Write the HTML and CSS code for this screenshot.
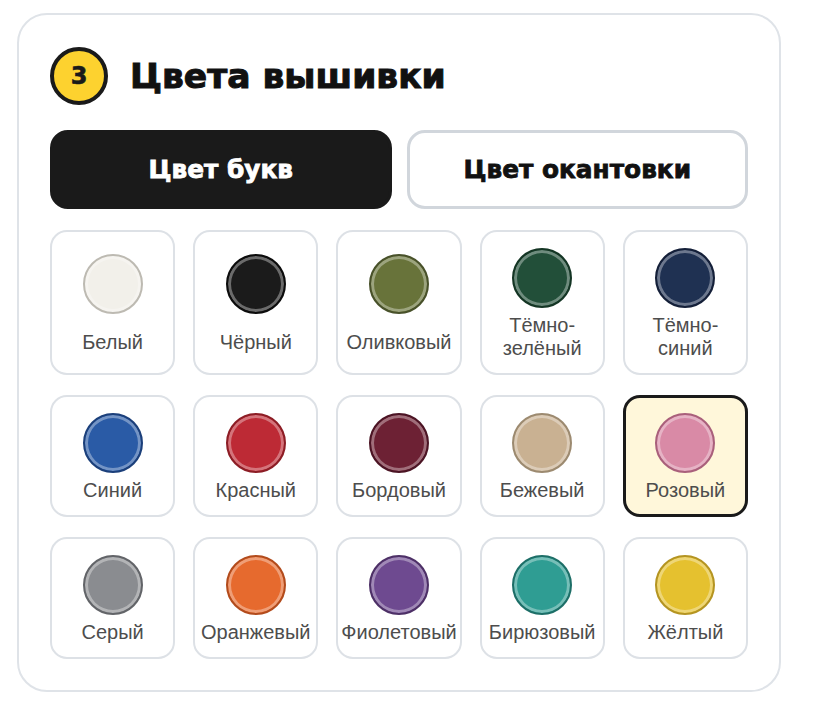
FILE: index.html
```html
<!DOCTYPE html>
<html lang="ru">
<head>
<meta charset="utf-8">
<title>Цвета вышивки</title>
<link rel="stylesheet" href="styles.css">
</head>
<body>
<section class="card">
  <header class="head">
    <span class="step">3</span>
    <h2 class="title">Цвета вышивки</h2>
  </header>
  <div class="tabs">
    <button class="tab tab-active">Цвет букв</button>
    <button class="tab">Цвет окантовки</button>
  </div>
  <div class="grid">
    <div class="cell"><span class="dot c-white"></span><span class="label">Белый</span></div>
    <div class="cell"><span class="dot c-black"></span><span class="label">Чёрный</span></div>
    <div class="cell"><span class="dot c-olive"></span><span class="label">Оливковый</span></div>
    <div class="cell"><span class="dot c-dgreen"></span><span class="label">Тёмно-<br>зелёный</span></div>
    <div class="cell"><span class="dot c-dblue"></span><span class="label">Тёмно-<br>синий</span></div>
    <div class="cell"><span class="dot c-blue"></span><span class="label">Синий</span></div>
    <div class="cell"><span class="dot c-red"></span><span class="label">Красный</span></div>
    <div class="cell"><span class="dot c-bordo"></span><span class="label">Бордовый</span></div>
    <div class="cell"><span class="dot c-beige"></span><span class="label">Бежевый</span></div>
    <div class="cell cell-selected"><span class="dot c-pink"></span><span class="label">Розовый</span></div>
    <div class="cell"><span class="dot c-grey"></span><span class="label">Серый</span></div>
    <div class="cell"><span class="dot c-orange"></span><span class="label">Оранжевый</span></div>
    <div class="cell"><span class="dot c-violet"></span><span class="label">Фиолетовый</span></div>
    <div class="cell"><span class="dot c-teal"></span><span class="label">Бирюзовый</span></div>
    <div class="cell"><span class="dot c-yellow"></span><span class="label">Жёлтый</span></div>
  </div>
</section>
</body>
</html>
```
FILE: styles.css
```css
* { box-sizing: border-box; }
html, body { background: #ffffff; }
body {
  margin: 0;
  padding: 13px 0 0 17px;
  font-family: "Liberation Sans", Arial, sans-serif;
}
.card {
  width: 764px;
  border: 2px solid #dfe3e8;
  border-radius: 30px;
  padding: 32px 31px 31px 31px;
  background: #fff;
}
.head {
  display: flex;
  align-items: center;
  gap: 22px;
}
.step {
  width: 58px;
  height: 58px;
  border-radius: 50%;
  border: 4px solid #1a1a1a;
  background: #fdd22f;
  display: flex;
  align-items: center;
  justify-content: center;
  font-family: "DejaVu Sans", sans-serif;
  font-weight: 700;
  font-size: 24px;
  color: #1a1a1a;
  -webkit-text-stroke: 0.6px #1a1a1a;
}
.title {
  margin: 0;
  font-family: "DejaVu Sans", sans-serif;
  font-weight: 700;
  font-size: 34.5px;
  color: #111;
  -webkit-text-stroke: 1px #111;
}
.tabs {
  display: grid;
  grid-template-columns: 1fr 1fr;
  gap: 15px;
  margin-top: 25px;
}
.tab {
  height: 79px;
  border-radius: 18px;
  border: 3px solid #d1d6dc;
  background: #fff;
  font-family: "DejaVu Sans", sans-serif;
  font-weight: 700;
  font-size: 24.8px;
  color: #111;
  -webkit-text-stroke: 0.8px #111;
  padding: 0;
}
.tab-active {
  background: #1a1a1a;
  border-color: #1a1a1a;
  color: #fff;
  -webkit-text-stroke: 0.8px #fff;
}
.grid {
  display: grid;
  grid-template-columns: repeat(5, 1fr);
  column-gap: 18px;
  row-gap: 20px;
  margin-top: 21px;
}
.cell {
  border: 2px solid #dde1e6;
  border-radius: 17px;
  display: flex;
  flex-direction: column;
  align-items: center;
  justify-content: space-around;
  padding: 16px 2px 13px;
  background: #fff;
}
.cell-selected {
  border: 3px solid #1a1a1a;
  background: #fff7da;
  padding: 15px 1px 12px;
}
.dot {
  width: 60px;
  height: 60px;
  border-radius: 50%;
  border: 2px solid var(--edge);
  background: var(--fill);
  box-shadow: inset 0 0 0 3px rgba(255, 255, 255, 0.35);
  flex: none;
}
.label {
  margin-top: 6px;
  font-size: 20px;
  line-height: 23px;
  color: #4d4d4d;
  text-align: center;
  white-space: nowrap;
}
.c-white  { --fill: #f2f0ea; --edge: #bdbab2; box-shadow: inset 0 0 0 3px rgba(255,255,255,0.3); }
.c-black  { --fill: #1b1b1b; --edge: #0c0c0c; box-shadow: inset 0 0 0 3px #6b6b6b; }
.c-olive  { --fill: #68733a; --edge: #48512a; }
.c-dgreen { --fill: #224f39; --edge: #143524; }
.c-dblue  { --fill: #1f3152; --edge: #141f38; }
.c-blue   { --fill: #2a5ba6; --edge: #1b3f7a; }
.c-red    { --fill: #bd2a35; --edge: #8c1d25; }
.c-bordo  { --fill: #6d2134; --edge: #4b1424; }
.c-beige  { --fill: #c9b192; --edge: #9c8a70; }
.c-pink   { --fill: #d98aa6; --edge: #a9607b; }
.c-grey   { --fill: #8a8c90; --edge: #626468; }
.c-orange { --fill: #e66a2e; --edge: #b24b1c; }
.c-violet { --fill: #6e4a90; --edge: #4d3066; }
.c-teal   { --fill: #2f9d93; --edge: #1d6e67; }
.c-yellow { --fill: #e5c12f; --edge: #b49422; }
```
